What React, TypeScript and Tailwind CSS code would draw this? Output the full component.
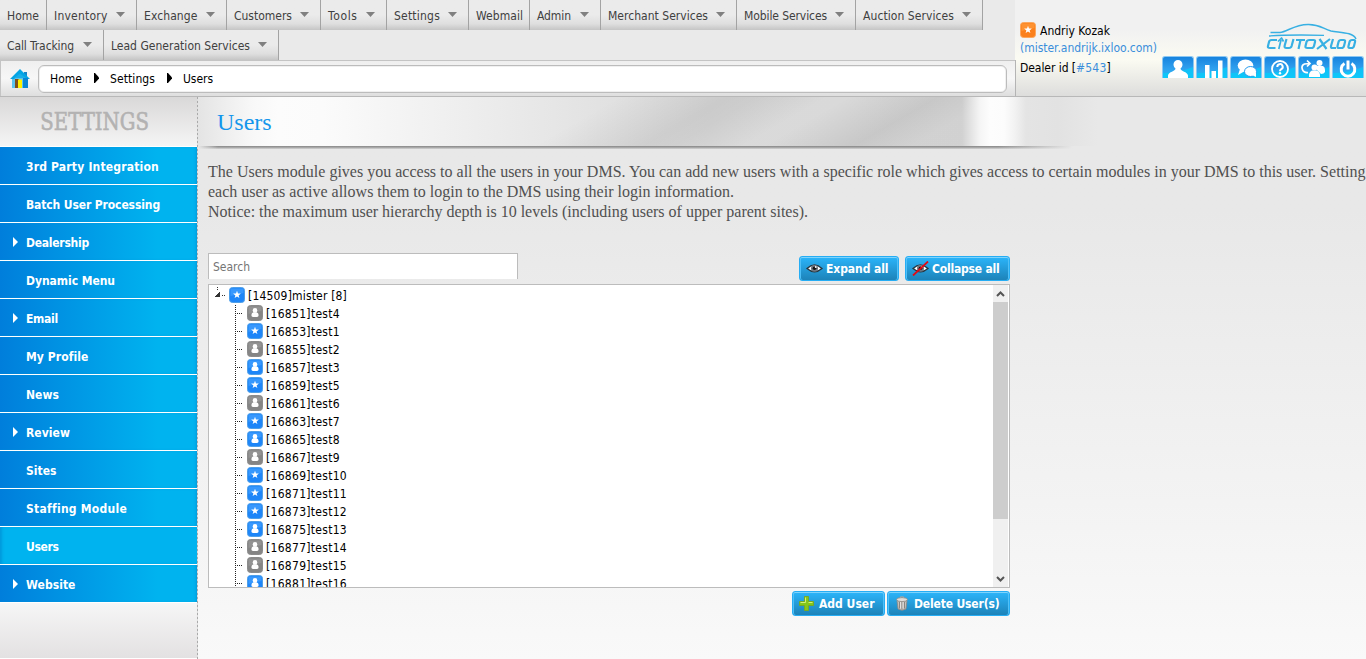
import { useLayoutEffect, useRef, useState, type ReactNode } from 'react';

function Fit({ w, children }: { w: number; children: string }) {
  const ref = useRef<HTMLSpanElement>(null);
  const [spacing, setSpacing] = useState(0);
  useLayoutEffect(() => {
    if (ref.current) setSpacing((w - ref.current.getBoundingClientRect().width) / children.length);
  }, []);
  return (
    <span ref={ref} className="whitespace-nowrap" style={{ letterSpacing: spacing }}>
      {children}
    </span>
  );
}

type Nav = { label: string; w: number; box: string; plain?: boolean };
const row1: Nav[] = [
  { label: 'Home', w: 32, box: 'w-[47px]', plain: true },
  { label: 'Inventory', w: 53.5, box: 'w-[90px]' },
  { label: 'Exchange', w: 53.5, box: 'w-[90px]' },
  { label: 'Customers', w: 58, box: 'w-[94px]' },
  { label: 'Tools', w: 29.5, box: 'w-[66px]' },
  { label: 'Settings', w: 46, box: 'w-[82px]' },
  { label: 'Webmail', w: 47, box: 'w-[61px]', plain: true },
  { label: 'Admin', w: 34, box: 'w-[71px]' },
  { label: 'Merchant Services', w: 100, box: 'w-[136px]' },
  { label: 'Mobile Services', w: 83, box: 'w-[119px]' },
  { label: 'Auction Services', w: 91, box: 'w-[127px]' },
];
const row2: Nav[] = [
  { label: 'Call Tracking', w: 67, box: 'w-[104px]' },
  { label: 'Lead Generation Services', w: 139, box: 'w-[175px]' },
];

function NavRow({ items }: { items: Nav[] }) {
  return (
    <ul className="flex h-[30px]">
      {items.map((n) => (
        <li
          key={n.label}
          className={`${n.box} flex h-[30px] items-center justify-between border-r border-[#a3a3a3] bg-linear-to-b from-[#ebebeb] from-50% via-[#dedede] via-80% to-[#c5c5c5] pl-[7px] pt-px text-[#404040]`}
        >
          <Fit w={n.w}>{n.label}</Fit>
          {!n.plain && (
            <svg className="mr-[11px] mb-[3px] shrink-0" width="9" height="5" viewBox="0 0 9 5">
              <path d="M0 0h9L4.500 5z" fill="#808080" />
            </svg>
          )}
        </li>
      ))}
    </ul>
  );
}

function Crumb({ w, children, last }: { w: number; children: string; last?: boolean }) {
  return (
    <>
      <span className="pt-px">
        <Fit w={w}>{children}</Fit>
      </span>
      {!last && (
        <svg className="mr-[11px] ml-[12px] mb-px" width="5" height="10" viewBox="0 0 5 10">
          <path d="M0 0h1l4 4.500v1L1 10H0z" fill="#000" />
        </svg>
      )}
    </>
  );
}

function Badge({ kind, color }: { kind: 'star' | 'user'; color: 'blue' | 'gray' | 'orange' }) {
  const [a, b, c] = {
    blue: ['#42a0ff', '#1e86f8', '#4f9fe8'],
    gray: ['#999', '#858585', '#8c8c8c'],
    orange: ['#ff9a3a', '#fb801b', '#fba75d'],
  }[color];
  return (
    <svg className="shrink-0" width="16" height="16" viewBox="0 0 16 16">
      <rect x=".5" y=".5" width="15" height="15" rx="3" fill={b} stroke={c} />
      <path d="M3 1.500h10q1.500 0 1.500 1.500v3L1.500 9V3q0-1.500 1.500-1.500z" fill={a} opacity=".7" />
      {kind === 'star' ? (
        <path d="M8 3.800l1 2.700 2.900.1-2.300 1.800.8 2.700L8 9.500l-2.400 1.600.8-2.700-2.300-1.800 2.900-.1z" fill="#fff" />
      ) : (
        <>
          <circle cx="8" cy="5.400" r="2.300" fill="#fff" />
          <path d="M6.500 7.200h3Q11.800 8 11.600 10.300Q11.600 12 10 12H6Q4.400 12 4.400 10.300Q4.200 8 6.500 7.200z" fill="#fff" />
        </>
      )}
    </svg>
  );
}

function Tile({ children }: { children: ReactNode }) {
  return (
    <div className="h-[22px] w-8 rounded-t-[3px] border-x border-t border-[#8bc7f2] bg-linear-to-b from-[#1783de] via-[#2fa0ee] via-55% to-[#1cbcf6]">
      <svg width="30" height="21" viewBox="0 0 30 21" fill="#fff">
        <path d="M0 16Q15 16 30 10v11H0z" fill="#00d2fc" opacity=".6" />
        {children}
      </svg>
    </div>
  );
}

function Logo() {
  return (
    <svg width="92" height="28" viewBox="0 0 92 28" fill="none" stroke="#38b0e3">
      <path d="M4.500 9.500H14C21 9 28 1.700 42 1.500C54 1.200 57 6 65 8C74 9.700 87 9 90 16" strokeWidth="1.500" />
      <path d="M3 13Q22 11.500 58 12.300" strokeWidth="1.300" />
      <g strokeWidth="2.200" strokeLinejoin="round">
        <path d="M11 17H5.500Q3.500 17 3 19L2 23Q1.500 25 4 25H9.500" />
        <path d="M12.800 26L15 17M12 18.500L15.500 15L17.500 18.500" strokeWidth="1.700" />
        <path d="M20.500 16L18.700 22.500Q18 25 20.500 25H23Q25 25 25.600 23L27.500 16" />
        <path d="M30 17H39M34.500 17L32.500 26" />
        <path d="M43.500 17H47.500Q49.500 17 49 19L48 23Q47.500 25 45.500 25H41.500Q39 25 39.500 23L40.500 19Q41 17 43.500 17z" />
        <path d="M53.500 16L60.500 26M64 16L51 26" />
        <path d="M67 16L65 23Q64.500 25 66.500 25H70" />
        <path d="M75 17H77.500Q79.500 17 79 19L78 23Q77.500 25 75.500 25H73Q71 25 71.500 23L72.500 19Q73 17 75 17z" />
        <path d="M86 17H88Q89.500 17 89 19L88 23Q87.500 25 85.500 25H83.500Q82 25 82.500 23L83.500 19Q84 17 86 17z" />
      </g>
    </svg>
  );
}

const menu: { label: string; w: number; sub?: boolean }[] = [
  { label: '3rd Party Integration', w: 133 },
  { label: 'Batch User Processing', w: 134 },
  { label: 'Dealership', w: 63, sub: true },
  { label: 'Dynamic Menu', w: 89 },
  { label: 'Email', w: 32, sub: true },
  { label: 'My Profile', w: 62 },
  { label: 'News', w: 33 },
  { label: 'Review', w: 44, sub: true },
  { label: 'Sites', w: 30.5 },
  { label: 'Staffing Module', w: 100 },
  { label: 'Users', w: 32.5 },
  { label: 'Website', w: 49.5, sub: true },
];

function Eye({ off }: { off?: boolean }) {
  return (
    <svg width="17" height="15" viewBox="0 0 17 15">
      <path d="M1 7.500Q8.500.5 16 7.500Q8.500 14 1 7.500z" fill="#fff" stroke="#26353e" strokeWidth="1.300" />
      <circle cx="8.500" cy="7.300" r="3.500" fill="#6e7580" />
      <circle cx="8.500" cy="7.300" r="1.800" fill="#111" />
      <circle cx="9.700" cy="6" r=".9" fill="#fff" />
      {off && <path d="M1 14.500L16 .5" stroke="#e00a14" strokeWidth="1.800" />}
    </svg>
  );
}

function Plus() {
  return (
    <svg width="15" height="15" viewBox="0 0 15 15">
      <path d="M5.500.5h4v5h5v4h-5v5h-4v-5h-5v-4h5z" fill="#85c81b" stroke="#74a92a" />
      <path d="M6.500 1.500v5h-5M9.500 6.500h4" stroke="#d4f07a" fill="none" />
    </svg>
  );
}

function Trash() {
  return (
    <svg width="12" height="15" viewBox="0 0 12 15">
      <path d="M1 4.500h10L10 13Q6 15.500 2 13z" fill="#c4c1bc" stroke="#8c8782" strokeWidth=".8" />
      <path d="M3.500 6v6.500M6 6v7.500M8.500 6v6.500" stroke="#8a8580" />
      <path d="M4.500 5.500v7M7 5.500v7" stroke="#eee" strokeWidth=".8" />
      <ellipse cx="6" cy="3.600" rx="5.400" ry="2" fill="#e0dedb" stroke="#8a8580" strokeWidth=".8" />
      <path d="M4.500 2V.8h3V2" fill="none" stroke="#a8a49f" />
    </svg>
  );
}

function Button({ icon, label, w, box }: { icon: ReactNode; label: string; w: number; box: string }) {
  return (
    <button
      className={`${box} flex h-[25px] items-center rounded-[3px] border border-[#26adf4] bg-linear-to-b from-[#2bb5fb] to-[#1d83b9] font-bold text-white shadow-[inset_0_1px_0_0_#7fd3fc,inset_1px_0_0_0_#4fc0f8,inset_-1px_0_0_0_#4fc0f8]`}
    >
      <span className="flex w-[20px] shrink-0 items-center">{icon}</span>
      <Fit w={w}>{label}</Fit>
    </button>
  );
}

const users: [string, 'star' | 'user', 'blue' | 'gray'][] = [
  ['[16851]test4', 'user', 'gray'],
  ['[16853]test1', 'star', 'blue'],
  ['[16855]test2', 'user', 'gray'],
  ['[16857]test3', 'user', 'blue'],
  ['[16859]test5', 'star', 'blue'],
  ['[16861]test6', 'user', 'gray'],
  ['[16863]test7', 'star', 'blue'],
  ['[16865]test8', 'user', 'blue'],
  ['[16867]test9', 'user', 'gray'],
  ['[16869]test10', 'star', 'blue'],
  ['[16871]test11', 'star', 'blue'],
  ['[16873]test12', 'star', 'blue'],
  ['[16875]test13', 'user', 'blue'],
  ['[16877]test14', 'user', 'gray'],
  ['[16879]test15', 'user', 'gray'],
  ['[16881]test16', 'user', 'blue'],
];

export default function App() {
  return (
    <div className="flex h-[659px] w-[1366px] flex-col overflow-hidden bg-[#e8e8e8] font-['DejaVu_Sans_Condensed','DejaVu_Sans',sans-serif] text-[12px] leading-[18px] text-black">
      <header className="flex h-[97px] shrink-0 border-b border-[#b8b8b8]">
        <div className="flex w-[1015px] flex-col bg-[#eaeaea]">
          <NavRow items={row1} />
          <NavRow items={row2} />
          <div className="flex h-9 items-center border-t border-l border-[#c4c4c4] bg-linear-to-b from-[#efefef] via-[#f7f7f7] via-50% to-[#dedede] pl-[9px]">
            <svg width="20" height="20" viewBox="0 0 20 20">
              <path d="M2 9h16v10H2z" fill="#5cc4ef" />
              <path d="M14 3h3v5h-3z" fill="#1684c8" />
              <path d="M10 0L20 10H16L10 6 4 10H0z" fill="#04a5e4" />
              <path d="M4 9L10 4.500 16 9z" fill="#1aaee8" />
              <path d="M13 9h5v10h-5z" fill="#0a86d4" />
              <path d="M5 10h4v9H5z" fill="#80501a" />
              <path d="M8 10.500h4V19H8z" fill="#fff200" />
            </svg>
            <nav className="ml-2 flex h-7 w-[969px] items-center rounded-[6px] border border-[#bcbcbc] bg-white pl-[11px] shadow-[inset_0_0_0_1px_#f0f0f0]">
              <Crumb w={32}>Home</Crumb>
              <Crumb w={45}>Settings</Crumb>
              <Crumb w={30} last>
                Users
              </Crumb>
            </nav>
          </div>
        </div>
        <div className="flex h-24 w-[351px] bg-linear-to-b from-[#f1f1f1] from-30% via-[#fbfbf2] via-62% to-[#dddddc]">
          <div className="mt-[60px] h-9 w-px bg-[#b4b4b4]" />
          <div className="w-[146px] pt-[22px] pl-1">
            <div className="flex h-4 items-center gap-1">
              <Badge kind="star" color="orange" />
              <span className="pt-[2px]">
                <Fit w={70}>Andriy Kozak</Fit>
              </span>
            </div>
            <div className="flex h-[18px] items-center pt-px text-[#3a8edb]">
              <Fit w={137}>(mister.andrijk.ixloo.com)</Fit>
            </div>
            <div className="mt-[3px] flex h-[18px] items-center">
              <Fit w={56}>Dealer id [</Fit>
              <span className="text-[#3a8edb]">
                <Fit w={30.5}>#543</Fit>
              </span>
              <span>]</span>
            </div>
          </div>
          <div className="flex flex-col pt-[23px]">
            <div className="ml-[104px] h-[33px]">
              <Logo />
            </div>
            <div className="flex gap-[2px]">
              <Tile>
                <path d="M15 3a4.500 4.500 0 0 1 4.500 4.500c0 2-1 3-2 4 0 3 7 3 7.500 7V21H5v-2.500c.5-4 7.500-4 7.500-7-1-1-2-2-2-4A4.500 4.500 0 0 1 15 3z" />
              </Tile>
              <Tile>
                <path d="M8 8h4.500v13H8zM14.500 14H19v7h-4.500zM21 3.500h4.500V21H21z" />
              </Tile>
              <Tile>
                <ellipse cx="14.500" cy="8.500" rx="7.800" ry="6" />
                <path d="M9 12l-2 6 7-4z" />
                <ellipse cx="19.500" cy="14.500" rx="6" ry="5" stroke="#299bed" />
                <path d="M21 18l4 2v-5z" />
              </Tile>
              <Tile>
                <circle cx="15" cy="12" r="8" fill="none" stroke="#fff" strokeWidth="1.800" />
                <path d="M12.300 10a2.700 2.700 0 1 1 4 2.200q-1.300.7-1.300 2" fill="none" stroke="#fff" strokeWidth="2" />
                <circle cx="15" cy="16.300" r="1.200" />
              </Tile>
              <Tile>
                <circle cx="20.500" cy="6" r="3" />
                <path d="M18 9h6q2 1 2 4v2q-1 2-4 2l-4-4z" />
                <circle cx="15.500" cy="10.500" r="3" />
                <path d="M10 20q-.5-5 3-6.500h5q3.500 1.500 3 6.500z" />
                <path d="M9 15.500C3 16 1 9 5.500 7L11 6.500M8 3.500l3 3-3 3" fill="none" stroke="#fff" strokeWidth="1.700" />
              </Tile>
              <Tile>
                <path d="M11.500 6.500a6.800 6.800 0 1 0 7 0" fill="none" stroke="#fff" strokeWidth="3" />
                <path d="M13.500 3.500h3v9h-3z" />
              </Tile>
            </div>
          </div>
        </div>
      </header>

      <div className="flex h-[562px]">
        <aside className="flex w-[197px] shrink-0 flex-col">
          <h2 className="flex h-[50px] items-center justify-center border-b border-white bg-linear-to-b from-[#d9d8d8] to-[#f5f5f5] pr-[8px] font-['DejaVu_Serif_Condensed','DejaVu_Serif',serif] text-[24px] text-[#b3b2b2] [-webkit-text-stroke:0.6px_#b3b2b2]">
            <span className="origin-center scale-x-[.91]">SETTINGS</span>
          </h2>
          {menu.map((m) => (
            <div
              key={m.label}
              className={`flex h-[38px] shrink-0 items-center border-b border-white font-bold text-white ${
                m.label === 'Users'
                  ? 'bg-[#00b3ef] shadow-[inset_3px_0_3px_-1px_#0098dc]'
                  : 'bg-linear-to-r from-[#007edb] to-[#00b3ef] to-80% shadow-[inset_-2px_0_3px_-1px_#0098dc]'
              }`}
            >
              <span className="flex w-[26px] shrink-0 pl-[13px]">
                {m.sub && (
                  <svg width="5" height="10" viewBox="0 0 5 10">
                    <path d="M0 0l5 5-5 5z" fill="#fff" />
                  </svg>
                )}
              </span>
              <span className="pt-[2px]">
                <Fit w={m.w}>{m.label}</Fit>
              </span>
            </div>
          ))}
          <div className="flex-1 border-b border-white bg-linear-to-b from-[#f6f6f6] to-[#e3e1e2]" />
        </aside>
        <div className="w-px shrink-0 bg-[repeating-linear-gradient(to_bottom,#aaa_0,#aaa_2px,#ddd_2px,#ddd_4px)]" />

        <main className="flex w-[1168px] flex-col bg-linear-to-b from-[#e8e8e8] from-20% to-[#f9f9f9]">
          <div className="flex h-[52px] flex-col bg-[#e8e8e8]">
            <div className="flex h-[49px] items-center bg-[linear-gradient(to_right,transparent_764px,#f5f5f5_782px,#fdfdfd_792px,#fcfcfc_806px,#f3f3f3_816px,#e4e4e4_828px,#e2e2e2_860px,#e8e8e8_900px),linear-gradient(150deg,transparent_210px,rgba(0,0,0,.07)_265px,rgba(0,0,0,.06)_280px,transparent_315px,transparent_325px,rgba(0,0,0,.08)_370px,rgba(0,0,0,.03)_400px,rgba(0,0,0,.03)_500px),linear-gradient(to_right,#e4e4e4_0px,#efefef_30px,#f8f8f8_55px,#fcfcfc_80px,#fbfbfb_125px,#f5f5f5_190px,#ebebeb_300px,#e2e2e2_400px,#dadada_510px,#d8d8d8_770px)] bg-size-[1168px_49px] pl-[19px]">
              <h1 className="pt-px font-['Liberation_Serif',serif] text-[24px] text-[#1496ec]">Users</h1>
            </div>
            <div className="h-[3px] w-[880px] bg-[linear-gradient(to_right,#e8e8e8_0,transparent_20px,transparent_800px,#e8e8e8_875px),linear-gradient(to_bottom,#868686,#a8a8a8_50%,#d6d6d6)]" />
          </div>
          <div className="h-[105px] overflow-hidden pt-[13px] pl-[10px] font-['Liberation_Serif',serif] text-[16px] leading-5 whitespace-nowrap text-[#505050]">
            <p>
              <Fit w={1157.5}>
                The Users module gives you access to all the users in your DMS. You can add new users with a specific role which gives access to certain modules in your DMS to this user. Setting
              </Fit>
            </p>
            <p>
              <Fit w={526}>each user as active allows them to login to the DMS using their login information.</Fit>
            </p>
            <p>
              <Fit w={600}>Notice: the maximum user hierarchy depth is 10 levels (including users of upper parent sites).</Fit>
            </p>
          </div>

          <section className="ml-[10px] flex w-[802px] flex-col">
            <div className="flex h-[30px] justify-between pb-px">
              <div className="mt-[-1px] flex h-[26px] w-[310px] items-center border border-b-0 border-[#bcbcbc] bg-white pl-1 text-[#757575]">
                <Fit w={37}>Search</Fit>
              </div>
              <div className="flex gap-[6px] pt-[2px]">
                <Button icon={<Eye />} label="Expand all" w={62.5} box="w-[100px] pl-[6px]" />
                <Button icon={<Eye off />} label="Collapse all" w={67.5} box="w-[105px] pl-[6px]" />
              </div>
            </div>
            <div className="flex h-[304px] border border-[#bcbcbc] bg-white">
              <div className="flex h-[302px] w-[784px] flex-col overflow-hidden pt-px">
                <div className="flex h-[18px] shrink-0 items-center pl-[5px]">
                  <svg width="15" height="18" viewBox="0 0 15 18" shapeRendering="crispEdges">
                    <path d="M0 11L6 5v6z" fill="#333" />
                    <path d="M3 1h1v1H3zM3 3h1v1H3zM8 9h1v1H8zM10 9h1v1h-1z" fill="#333" />
                  </svg>
                  <Badge kind="star" color="blue" />
                  <span className="ml-[3px] pt-[2px]">
                    <Fit w={99}>[14509]mister [8]</Fit>
                  </span>
                </div>
                {users.map(([name, kind, color]) => (
                  <div key={name} className="flex h-[18px] shrink-0 items-center pl-[26px]">
                    <svg width="12" height="18" viewBox="0 0 12 18" shapeRendering="crispEdges">
                      <path d="M.5 1v18" stroke="#222" strokeDasharray="1 1" />
                      <path d="M2 9.500h6" stroke="#222" strokeDasharray="1 1" />
                    </svg>
                    <Badge kind={kind} color={color} />
                    <span className="ml-[3px] pt-[2px]">
                      <Fit w={name.length > 12 ? 81 : 74}>{name}</Fit>
                    </span>
                  </div>
                ))}
              </div>
              <div className="flex w-[15px] flex-col bg-[#f0f0f0]">
                <svg width="15" height="17" viewBox="0 0 15 17">
                  <path d="M4 11l3.500-3.500L11 11" fill="none" stroke="#555" strokeWidth="2" />
                </svg>
                <div className="h-[217px] bg-[#cdcdcd]" />
                <svg className="mt-auto" width="15" height="17" viewBox="0 0 15 17">
                  <path d="M4 7l3.500 3.500L11 7" fill="none" stroke="#555" strokeWidth="2" />
                </svg>
              </div>
            </div>
            <div className="mt-[3px] flex justify-end gap-[2px]">
              <Button icon={<Plus />} label="Add User" w={55.5} box="w-[93px] pl-[6px]" />
              <Button icon={<Trash />} label="Delete User(s)" w={85.5} box="w-[123px] pl-[8px] [&>span:first-child]:w-[18px]" />
            </div>
          </section>
        </main>
      </div>
    </div>
  );
}
